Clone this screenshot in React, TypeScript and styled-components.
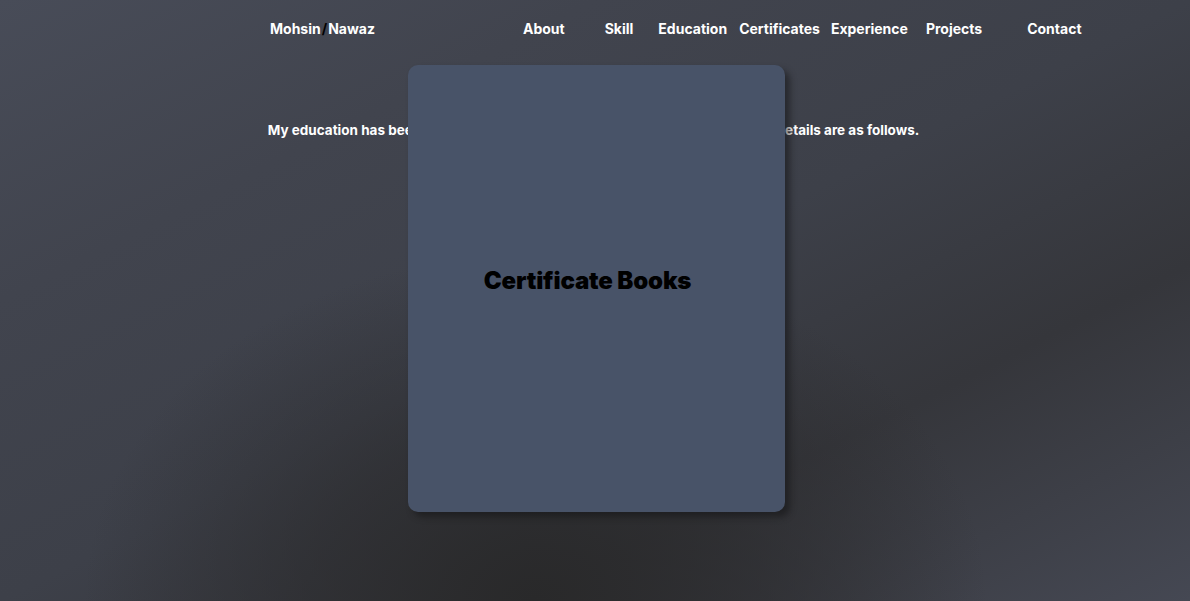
import { FC } from "react";
import styled, { createGlobalStyle } from "styled-components";

const GlobalStyle = createGlobalStyle`
  html, body {
    margin: 0;
    padding: 0;
    height: 100%;
  }
  body {
    font-family: Inter, "Noto Sans", sans-serif;
    background: #2b2b2d;
  }
`;

const Page = styled.div`
  position: relative;
  width: 100%;
  height: 601px;
  overflow: hidden;
  background:
    radial-gradient(ellipse 38% 58% at 45% 100%, rgba(41, 41, 42, 1) 0%, rgba(42, 42, 44, 0.6) 50%, rgba(44, 44, 46, 0) 100%),
    linear-gradient(to bottom right, #484c58 0%, #41444e 25%, #3d4049 50%, #35363b 72%, #454853 100%);
`;

const Header = styled.header`
  display: flex;
  align-items: center;
  height: 56px;
  padding-left: 270px;
  box-sizing: border-box;
`;

const Logo = styled.div`
  color: #ffffff;
  font-size: 14px;
  font-weight: 700;

  span {
    color: #000000;
    margin: 0 1px;
  }
`;

const Nav = styled.nav`
  display: flex;
  align-items: center;
  margin-left: 148px;
`;

const NavLink = styled.a<{ $gap: number }>`
  color: #ffffff;
  font-size: 14px;
  font-weight: 700;
  text-decoration: none;
  margin-left: ${(p) => p.$gap}px;
  cursor: pointer;
`;

const Intro = styled.p`
  margin: 66px 0 0;
  text-align: center;
  color: #ffffff;
  font-size: 13.5px;
  font-weight: 700;
  padding-right: 3px;
`;

const BookCard = styled.div`
  position: absolute;
  left: 408px;
  top: 65px;
  width: 377px;
  height: 447px;
  box-sizing: border-box;
  padding: 0 18px 17px 0;
  display: flex;
  align-items: center;
  justify-content: center;
  background: #485368;
  border-radius: 10px;
  box-shadow: 5px 5px 6px rgba(20, 20, 22, 0.55);
`;

const BookTitle = styled.h2`
  margin: 0;
  color: #000000;
  font-size: 24px;
  font-weight: 900;
  letter-spacing: -0.15px;
`;

const links = [
  { label: "About", gap: 0 },
  { label: "Skill", gap: 40 },
  { label: "Education", gap: 25 },
  { label: "Certificates", gap: 12 },
  { label: "Experience", gap: 11 },
  { label: "Projects", gap: 18 },
  { label: "Contact", gap: 45 },
];

const App: FC = () => {
  return (
    <>
      <GlobalStyle />
      <Page>
        <Header>
          <Logo>
            Mohsin<span>/</span>Nawaz
          </Logo>
          <Nav>
            {links.map((item) => (
              <NavLink key={item.label} $gap={item.gap}>
                {item.label}
              </NavLink>
            ))}
          </Nav>
        </Header>

        <Intro>
          My education has been a foundation for my career; the courses, degrees and details are
          as follows.
        </Intro>

        <BookCard>
          <BookTitle>Certificate Books</BookTitle>
        </BookCard>
      </Page>
    </>
  );
};

export default App;
